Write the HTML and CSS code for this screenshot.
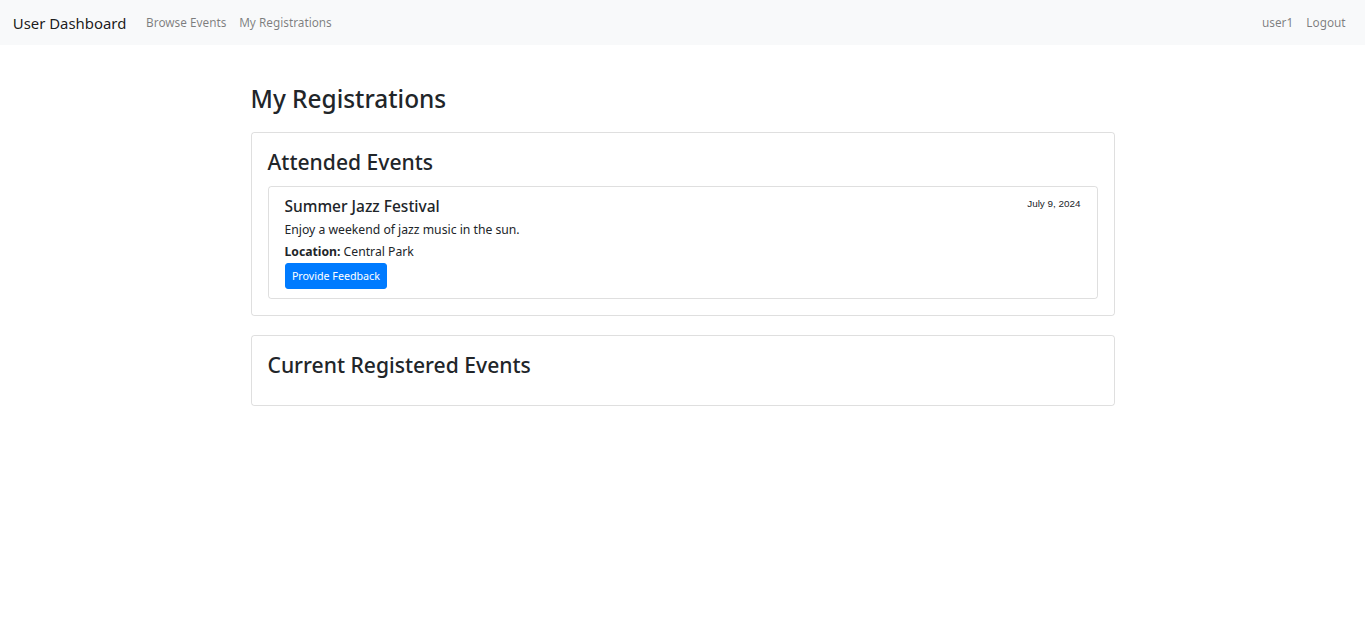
FILE: index.html
```html
<!DOCTYPE html>
<html lang="en">
<head>
<meta charset="utf-8">
<title>My Registrations</title>
<link rel="stylesheet" href="styles.css">
</head>
<body>
<nav class="navbar">
  <a class="brand" href="#">User Dashboard</a>
  <ul class="nav">
    <li><a class="nav-link" href="#">Browse Events</a></li>
    <li><a class="nav-link" href="#">My Registrations</a></li>
  </ul>
  <ul class="nav nav-right">
    <li><a class="nav-link" href="#">user1</a></li>
    <li><a class="nav-link" href="#">Logout</a></li>
  </ul>
</nav>
<main class="container">
  <h2 class="page-title">My Registrations</h2>
  <section class="card">
    <h3 class="section-title">Attended Events</h3>
    <div class="event-card">
      <div class="event-head">
        <h5 class="event-title">Summer Jazz Festival</h5>
        <small class="event-date">July 9, 2024</small>
      </div>
      <p class="event-text">Enjoy a weekend of jazz music in the sun.</p>
      <p class="event-text event-last"><strong>Location:</strong> Central Park</p>
      <button class="btn" type="button">Provide Feedback</button>
    </div>
  </section>
  <section class="card">
    <h3 class="section-title">Current Registered Events</h3>
  </section>
</main>
</body>
</html>
```
FILE: styles.css
```css
* { box-sizing: border-box; }
html, body { margin: 0; padding: 0; }
body {
  font-family: "Noto Sans", "Open Sans", sans-serif;
  font-size: 12.2px;
  line-height: 1.5;
  color: #212529;
  background: #fff;
}
a { text-decoration: none; }

.navbar {
  display: flex;
  align-items: center;
  height: 44.8px;
  padding: 1.5px 12.8px 0;
  background: #f8f9fa;
}
.brand {
  font-size: 14.9px;
  color: rgba(0, 0, 0, 0.9);
  margin-right: 13.4px;
  white-space: nowrap;
}
.nav {
  display: flex;
  list-style: none;
  margin: 0;
  padding: 0;
}
.nav-right { margin-left: auto; }
.nav-link {
  display: block;
  padding: 0 6.4px;
  font-size: 11.8px;
  color: rgba(0, 0, 0, 0.5);
  white-space: nowrap;
}
.nav-right .nav-link { padding: 0 6.6px; }

.container {
  width: 864px;
  margin: 0 auto;
  padding-top: 39.7px;
}
.page-title {
  margin: 0 0 18.3px;
  font-size: 24.4px;
  font-weight: 500;
  line-height: 1.2;
}
.card {
  border: 1px solid rgba(0, 0, 0, 0.125);
  border-radius: 3.2px;
  padding: 16px;
  margin-bottom: 19.2px;
}
.section-title {
  margin: 0 0 11.5px;
  font-size: 21.1px;
  font-weight: 500;
  line-height: 1.2;
}
.event-card {
  border: 1px solid rgba(0, 0, 0, 0.125);
  border-radius: 3.2px;
  padding: 10px 16px 9.4px;
}
.event-head {
  display: flex;
  justify-content: space-between;
  align-items: flex-start;
}
.event-title {
  margin: 0 0 5.4px;
  font-size: 15.5px;
  font-weight: 500;
  line-height: 1.2;
}
.event-date {
  font-family: "Liberation Sans", Arial, sans-serif;
  font-size: 9.9px;
  line-height: 1.2;
  margin-top: 1px;
}
.event-text {
  margin: 0 0 4px;
}
.event-last { margin-bottom: 2px; }
.event-text strong { font-weight: 700; }
.btn {
  display: inline-block;
  font-family: "Noto Sans", "Open Sans", sans-serif;
  font-size: 10.7px;
  line-height: 1.5;
  padding: 3.6px 6.4px;
  color: #fff;
  background: #007bff;
  border: 1px solid #007bff;
  border-radius: 3px;
  cursor: pointer;
}
```
